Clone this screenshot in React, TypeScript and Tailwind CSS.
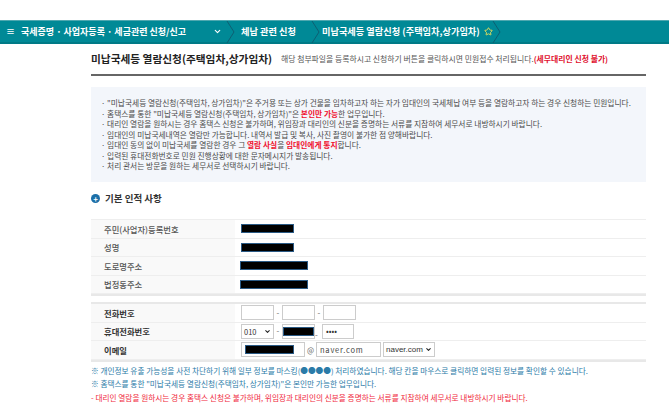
import { ChevronDown, Star } from 'lucide-react';

const font = { fontFamily: '"Noto Sans CJK KR", "Noto Sans", sans-serif' };

const notices = [
  <>"미납국세등 열람신청(주택임차, 상가임차)"은 주거용 또는 상가 건물을 임차하고자 하는 자가 임대인의 국세체납 여부 등을 열람하고자 하는 경우 신청하는 민원입니다.</>,
  <>홈택스를 통한 "미납국세등 열람신청(주택임차, 상가임차)"은 <b className="text-[#f00f2d]">본인만 가능</b>한 업무입니다.</>,
  <>대리인 열람을 원하시는 경우 홈택스 신청은 불가하며, 위임장과 대리인의 신분을 증명하는 서류를 지참하여 세무서로 내방하시기 바랍니다.</>,
  <>임대인의 미납국세내역은 열람만 가능합니다. 내역서 발급 및 복사, 사진 촬영이 불가한 점 양해바랍니다.</>,
  <>임대인 동의 없이 미납국세를 열람한 경우 그 <b className="text-[#f00f2d]">열람 사실</b>을 <b className="text-[#f00f2d]">임대인에게 통지</b>합니다.</>,
  <>입력된 휴대전화번호로 민원 진행상황에 대한 문자메시지가 발송됩니다.</>,
  <>처리 관서는 방문을 원하는 세무서로 선택하시기 바랍니다.</>,
];

function Redacted({ w }: { w: string }) {
  return <div className={`h-[9px] bg-black border border-[#2a5a85] ${w}`} />;
}

function Row({ label, strong, children }: { label: string; strong?: boolean; children: React.ReactNode }) {
  return (
    <div className="flex h-[18.5px] border-b border-[#eeeeee]">
      <div className={`w-[144px] bg-[#f9f9f9] pl-[13px] flex items-center text-[8.3px] ${strong ? 'font-bold text-[#333]' : 'font-medium text-[#555]'}`}>
        {label}
      </div>
      <div className="flex-1 pl-[6px] flex items-center">{children}</div>
    </div>
  );
}

function Box({ w, children }: { w: string; children?: React.ReactNode }) {
  return <div className={`h-[15px] bg-white border border-[#cccccc] flex items-center ${w}`}>{children}</div>;
}

const Dash = () => <span className="w-[8px] text-center text-[8px] text-[#666]">-</span>;

export default function App() {
  return (
    <div className="w-[669px] h-[420px] overflow-hidden bg-white" style={font}>
      <div className="h-[20px]" />
      <nav className="h-[24px] bg-[#008996] border-t border-[#4fa8b0] border-b-2 border-b-[#007a86] flex items-center text-white text-[9.2px] font-bold whitespace-nowrap">
        <span className="w-[21px] pl-[6px] text-[9px]">≡</span>
        <span className="w-[192px] text-[9px]">국세증명 · 사업자등록 · 세금관련 신청/신고</span>
        <ChevronDown className="w-[9px] h-[9px]" strokeWidth={3} />
        <svg width="10" height="22" viewBox="0 0 10 22" className="ml-[4px]" fill="none" stroke="#0d5f72"><path d="M1 0 L8 11 L1 22" /></svg>
        <span className="ml-[5px] w-[70px]">체납 관련 신청</span>
        <svg width="10" height="22" viewBox="0 0 10 22" fill="none" stroke="#0d5f72"><path d="M1 0 L8 11 L1 22" /></svg>
        <span className="ml-[1px]">미납국세등 열람신청 (주택임차,상가임차)</span>
        <Star className="w-[9px] h-[9px] ml-[4px] text-[#e6e05a]" strokeWidth={2.5} />
        <svg width="10" height="22" viewBox="0 0 10 22" className="-ml-[1px]" fill="none" stroke="#0d5f72"><path d="M1 0 L8 11 L1 22" /></svg>
      </nav>

      <main className="ml-[91px] w-[555px]">
        <div className="h-[32px] border-b-2 border-[#666] flex items-center">
          <h1 className="text-[10.7px] font-bold text-[#222] w-[190px] whitespace-nowrap">미납국세등 열람신청(주택임차,상가임차)</h1>
          <p className="text-[7.85px] text-[#555] whitespace-nowrap">
            해당 첨부파일을 등록하시고 신청하기 버튼을 클릭하시면 민원접수 처리됩니다.<b className="text-[#e0102d]">(세무대리인 신청 불가)</b>
          </p>
        </div>

        <section className="mt-[11px] h-[95px] bg-[#f3f6fb] pt-[11px] pl-[10px] text-[7.72px] leading-[10.5px] text-[#4a4a4a]">
          {notices.map((n, i) => (
            <div key={i} className="whitespace-nowrap">· {n}</div>
          ))}
        </section>

        <div className="mt-[11px] h-[11px] flex items-center gap-[5px]">
          <span className="w-[9px] h-[9px] rounded-full bg-[#1c6fa8] flex items-center justify-center text-white text-[8px] font-bold leading-none">+</span>
          <h2 className="text-[9.5px] font-bold text-[#333]">기본 인적 사항</h2>
        </div>

        <div className="mt-[15px] border-t border-[#eeeeee] border-b-2 border-b-[#e8e8e8]">
          <Row label="주민(사업자)등록번호"><Redacted w="w-[53px]" /></Row>
          <Row label="성명"><Redacted w="w-[53px]" /></Row>
          <Row label="도로명주소"><div className="-ml-px"><Redacted w="w-[68px]" /></div></Row>
          <Row label="법정동주소"><div className="-ml-px"><Redacted w="w-[68px]" /></div></Row>
        </div>

        <div className="mt-[6px] border-t-2 border-[#e8e8e8] border-b-2 border-b-[#e8e8e8]">
          <Row label="전화번호" strong>
            <Box w="w-[33px]" /><Dash /><Box w="w-[33px]" /><Dash /><Box w="w-[33px]" />
          </Row>
          <Row label="휴대전화번호" strong>
            <Box w="w-[33px]">
              <span className="pl-[2px] text-[7.5px] text-[#333]">010</span>
              <ChevronDown className="w-[7px] h-[7px] ml-auto mr-[2px] text-[#222]" strokeWidth={3.5} />
            </Box>
            <Dash />
            <Box w="w-[33px]"><div className="w-full h-[9px] bg-black border border-[#2a5a85]" /></Box>
            <div className="w-[7px]"><Dash /></div>
            <Box w="w-[32px]"><span className="pl-[3px] text-[8px] text-[#333] leading-none">••••</span></Box>
          </Row>
          <Row label="이메일" strong>
            <Box w="w-[64px]"><div className="ml-[3px] w-[49px] h-[9px] bg-black border border-[#2a5a85]" /></Box>
            <span className="w-[11px] text-center text-[7.5px] text-[#666]">@</span>
            <Box w="w-[65px]"><span className="pl-[3px] text-[7.5px] text-[#444] tracking-[0.8px]">naver.com</span></Box>
            <Box w="w-[52px] ml-[2px]">
              <span className="pl-[2px] text-[8px] text-[#333]" style={{ fontFamily: '"Liberation Sans", sans-serif' }}>naver.com</span>
              <ChevronDown className="w-[7px] h-[7px] ml-auto mr-[2px] text-[#222]" strokeWidth={3.5} />
            </Box>
          </Row>
        </div>

        <div className="mt-[2px] text-[7.68px] leading-[13.5px] whitespace-nowrap">
          <p className="text-[#2b7ba8]">※ 개인정보 유출 가능성을 사전 차단하기 위해 일부 정보를 마스킹(●●●●) 처리하였습니다. 해당 칸을 마우스로 클릭하면 입력된 정보를 확인할 수 있습니다.</p>
          <p className="text-[#2b7ba8]">※ 홈택스를 통한 "미납국세등 열람신청(주택임차, 상가임차)"은 본인만 가능한 업무입니다.</p>
          <p className="text-[#f0283c]">- 대리인 열람을 원하시는 경우 홈택스 신청은 불가하며, 위임장과 대리인의 신분을 증명하는 서류를 지참하여 세무서로 내방하시기 바랍니다.</p>
        </div>
      </main>
    </div>
  );
}
